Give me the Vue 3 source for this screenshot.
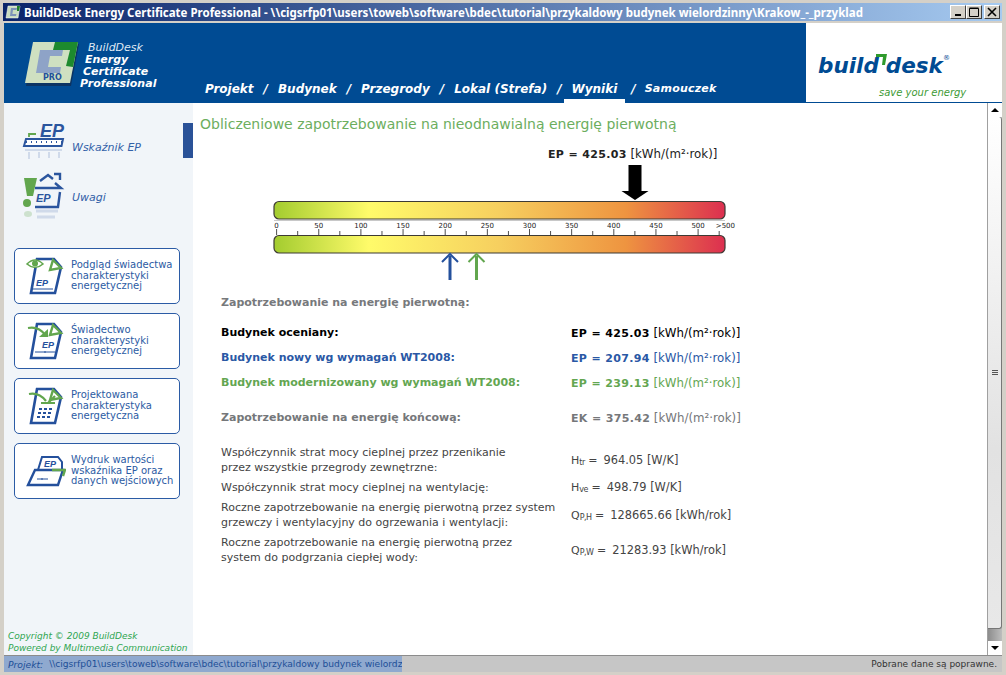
<script setup>
const navItems = [
  { label: 'Projekt' },
  { label: 'Budynek' },
  { label: 'Przegrody' },
  { label: 'Lokal (Strefa)' },
  { label: 'Wyniki', active: true },
]

const actions = [
  { icon: 'eye', lines: ['Podgląd świadectwa', 'charakterystyki', 'energetycznej'] },
  { icon: 'cert', lines: ['Świadectwo', 'charakterystyki', 'energetycznej'] },
  { icon: 'calc', lines: ['Projektowana', 'charakterystyka', 'energetyczna'] },
  { icon: 'print', lines: ['Wydruk wartości', 'wskaźnika EP oraz', 'danych wejściowych'] },
]

const ticks = Array.from({ length: 22 }, (_, i) => i * 25)
const unit = '[kWh/(m²·rok)]'

const summary = [
  { label: 'Budynek oceniany:', value: 'EP = 425.03', tone: 'black', top: 0 },
  { label: 'Budynek nowy wg wymagań WT2008:', value: 'EP = 207.94', tone: 'blue', top: 0 },
  { label: 'Budynek modernizowany wg wymagań WT2008:', value: 'EP = 239.13', tone: 'green', top: 0 },
  { label: 'Zapotrzebowanie na energię końcową:', value: 'EK = 375.42', tone: 'grey', top: 1 },
]

const details = [
  { lines: ['Współczynnik strat mocy cieplnej przez przenikanie', 'przez wszystkie przegrody zewnętrzne:'], sym: 'H', sub: 'tr', val: '964.05 [W/K]' },
  { lines: ['Współczynnik strat mocy cieplnej na wentylację:'], sym: 'H', sub: 've', val: '498.79 [W/K]' },
  { lines: ['Roczne zapotrzebowanie na energię pierwotną przez system', 'grzewczy i wentylacyjny do ogrzewania i wentylacji:'], sym: 'Q', sub: 'P,H', val: '128665.66 [kWh/rok]' },
  { lines: ['Roczne zapotrzebowanie na energię pierwotną przez', 'system do podgrzania ciepłej wody:'], sym: 'Q', sub: 'P,W', val: '21283.93 [kWh/rok]' },
]
</script>

<template>
  <div class="window">
    <div class="titlebar">
      <svg class="app-icon" width="16" height="14" viewBox="0 0 16 14">
        <path d="M3 1h12l-2 12H1z" fill="#c9dcc0" stroke="#fff" stroke-width=".5" />
        <path d="M6 3h6l-.5 2H8l-.6 4h4l-.4 2H5z" fill="#7d93b8" />
        <path d="M12 1h3l-1 5h-2z" fill="#1e7f2c" />
      </svg>
      <span class="title">BuildDesk Energy Certificate Professional - \\cigsrfp01\users\toweb\software\bdec\tutorial\przykaldowy budynek wielordzinny\Krakow_-_przyklad</span>
      <div class="controls">
        <span class="ctl"><svg width="10" height="10" viewBox="0 0 10 10"><rect x="2" y="7" width="6" height="2" fill="#000" /></svg></span>
        <span class="ctl"><svg width="10" height="10" viewBox="0 0 10 10"><path d="M.5 1.500h9v8h-9zM.5 1h9" fill="none" stroke="#000" /></svg></span>
        <span class="ctl close"><svg width="10" height="10" viewBox="0 0 10 10"><path d="M1 1l8 8M9 1l-8 8" stroke="#000" stroke-width="1.600" /></svg></span>
      </div>
    </div>

    <header class="header">
      <div class="logo">
        <svg class="logo-mark" width="56" height="46" viewBox="0 0 56 46">
          <path d="M9 3h45l-8 42H1z" fill="#10294f" opacity=".7" />
          <path d="M8 1h45l-8 41H0z" fill="#cfe0c1" />
          <path d="M30 1h23l-5 25-7-1 4-16H28z" fill="#1d8a2e" />
          <path d="M15 9h23l-1 6H25l-2 11h13l-1 6H11z" fill="#8ea3c7" />
          <text x="18" y="39" class="pro">PRO</text>
        </svg>
        <div class="logo-text">
          <span class="l1">BuildDesk</span>
          <span class="l2">Energy</span>
          <span class="l3">Certificate</span>
          <span class="l4">Professional</span>
        </div>
      </div>
      <nav class="nav">
        <template v-for="(item, i) in navItems" :key="item.label">
          <span v-if="i" class="sep">/</span>
          <span class="nav-item" :class="{ active: item.active }">{{ item.label }}</span>
        </template>
        <span class="sep last">/</span>
        <span class="nav-item small">Samouczek</span>
      </nav>
      <div class="brand">
        <div class="brand-name">
          <span>build</span>
          <svg class="tick" width="11" height="12" viewBox="0 0 11 12"><path d="M0 0h11l-2 11H6l1-8H0z" fill="#2f9a2c" /></svg>
          <span>desk</span>
          <sup>®</sup>
        </div>
        <div class="brand-tag">save your energy</div>
      </div>
    </header>

    <div class="body">
      <aside class="sidebar">
        <div class="side-links">
          <div class="side-link">
            <svg width="48" height="50" viewBox="0 0 48 50">
              <text x="18" y="16" class="ep-big">EP</text>
              <path d="M7 16v-3h7" fill="none" stroke="#62a64e" stroke-width="1.800" />
              <path d="M4 18h37l-1.500 7H2z" fill="#fff" stroke="#2b559e" stroke-width="2" />
              <path d="M4 21h36" stroke="#2b559e" stroke-dasharray="1 4" stroke-width="2" />
              <path d="M3 29h37M7 31v7M17 31v6M27 31v6M37 31v6" stroke="#2b559e" opacity=".16" stroke-width="2" />
            </svg>
            <span>Wskaźnik EP</span>
          </div>
          <div class="side-link">
            <svg width="48" height="54" viewBox="0 0 48 54">
              <path d="M2 7h13l-4 18H5z" fill="#62a64e" />
              <circle cx="5" cy="32" r="4" fill="#62a64e" />
              <path d="M18 10l8-6 5 4M32 3h6v6M13 17h26l-6-5M38 21l-2 15H13" fill="none" stroke="#2b559e" stroke-width="2.400" />
              <text x="14" y="31" class="ep-small">EP</text>
              <ellipse cx="6" cy="43" rx="4" ry="3" fill="#62a64e" opacity=".25" />
              <path d="M14 40h22M15 46h18" stroke="#2b559e" opacity=".16" stroke-width="3" />
            </svg>
            <span>Uwagi</span>
          </div>
        </div>
        <span class="marker"></span>

        <div class="actions">
          <div v-for="action in actions" :key="action.icon" class="action">
            <svg class="action-icon" width="42" height="38" viewBox="0 0 42 38">
              <template v-if="action.icon === 'print'">
                <path d="M18 5h16l4 5v8H14z" fill="none" stroke="#24509c" stroke-width="2" />
                <text x="20" y="15" class="ep-tiny">EP</text>
                <path d="M11 18h28l-5 15H4z" fill="#fff" stroke="#24509c" stroke-width="2.400" />
                <path d="M28 18h13l-2 6" fill="none" stroke="#62a64e" stroke-width="2.400" />
                <path d="M13 27h11M18 26v2" stroke="#24509c" />
              </template>
              <template v-else>
                <path d="M13 2h17l7 8-6 26H7z" fill="#fff" stroke="#24509c" stroke-width="2.600" />
                <path d="M29 3l8 8-11 2z" fill="#fff" stroke="#62a64e" stroke-width="2.400" />
                <template v-if="action.icon === 'eye'">
                  <path d="M3 7q8-8 16 0q-8 7-16 0z" fill="#fff" stroke="#62a64e" stroke-width="1.600" />
                  <circle cx="11" cy="6.500" r="3" fill="#62a64e" />
                  <text x="12" y="29" class="ep-tiny">EP</text>
                  <path d="M9 32h20" stroke="#24509c" />
                </template>
                <template v-if="action.icon === 'cert'">
                  <path d="M4 6q11-2 17 7" fill="none" stroke="#62a64e" stroke-width="2.200" />
                  <path d="M15 15h9v-8z" fill="#62a64e" />
                  <text x="18" y="26" class="ep-tiny">EP</text>
                  <path d="M11 30h20M21 29v2" stroke="#24509c" />
                </template>
                <template v-if="action.icon === 'calc'">
                  <path d="M5 7q10-2 17 7" fill="none" stroke="#62a64e" stroke-width="2.200" />
                  <path d="M17 16h14M24 16l7-7" stroke="#62a64e" stroke-width="2.200" />
                  <path d="M15 21h3v2h-3zM20 21h3v2h-3zM25 21h3v2h-3zM14 25h3v2h-3zM19 25h3v2h-3zM24 25h3v2h-3zM13 29h3v2h-3zM18 29h3v2h-3zM23 29h3v2h-3z" fill="#24509c" />
                </template>
              </template>
            </svg>
            <div class="action-text">
              <span v-for="line in action.lines" :key="line">{{ line }}</span>
            </div>
          </div>
        </div>

        <div class="copyright">
          <span>Copyright © 2009 BuildDesk</span>
          <span>Powered by Multimedia Communication</span>
        </div>
      </aside>

      <main class="main">
        <h1 class="heading">Obliczeniowe zapotrzebowanie na nieodnawialną energię pierwotną</h1>
        <div class="gauge-label"><b class="val">EP = 425.03</b> <span class="unit">{{ unit }}</span></div>
        <svg class="gauge" width="465" height="118" viewBox="0 0 465 118">
          <defs>
            <linearGradient id="scale">
              <stop offset="0" stop-color="#a3cc2f" />
              <stop offset=".21" stop-color="#fffb6a" />
              <stop offset=".5" stop-color="#f6cf5f" />
              <stop offset=".78" stop-color="#ee9440" />
              <stop offset="1" stop-color="#dc2f50" />
            </linearGradient>
          </defs>
          <path d="M355.500 0h13v26h7L362 35l-13.500-9h7z" fill="#000" />
          <rect x="1" y="36.500" width="451" height="17.500" rx="5" fill="url(#scale)" stroke="#3d3a34" stroke-width="1.200" />
          <rect x="1" y="55" width="451" height="1" fill="#c8c8c8" />
          <g v-for="t in ticks" :key="t">
            <line :x1="3.6 + t * 0.843" :x2="3.6 + t * 0.843" :y1="t % 50 === 0 ? 64 : 66" y2="70" stroke="#222" stroke-width=".8" />
            <text v-if="t % 50 === 0 && t <= 500" :x="3.6 + t * 0.843" y="63" class="tick-label" text-anchor="middle">{{ t }}</text>
          </g>
          <text x="462" y="63" class="tick-label" text-anchor="end">&gt;500</text>
          <rect x="1" y="70.500" width="451" height="17.500" rx="5" fill="url(#scale)" stroke="#3d3a34" stroke-width="1.200" />
          <path d="M177 115V91" stroke="#24509c" stroke-width="3" />
          <path d="M169 97l8-8 8 8" fill="none" stroke="#24509c" stroke-width="2" />
          <path d="M203.500 115V91" stroke="#62a64e" stroke-width="3" />
          <path d="M195.500 97l8-8 8 8" fill="none" stroke="#62a64e" stroke-width="2" />
        </svg>

        <div class="results">
          <div class="results-title">Zapotrzebowanie na energię pierwotną:</div>
          <div v-for="row in summary" :key="row.label" class="sum-row" :class="[row.tone, { spaced: row.top }]">
            <b class="col-left">{{ row.label }}</b>
            <span><b class="val">{{ row.value }}</b> <span class="unit">{{ unit }}</span></span>
          </div>
          <div class="details">
            <div v-for="row in details" :key="row.sub" class="detail-row">
              <div class="col-left detail-label">
                <span v-for="line in row.lines" :key="line">{{ line }}</span>
              </div>
              <div class="detail-val">
                <span class="sym">{{ row.sym }}<sub>{{ row.sub }}</sub> =</span>
                <span>{{ row.val }}</span>
              </div>
            </div>
          </div>
        </div>
      </main>

      <div class="scrollbar">
        <span class="sb-btn"><i class="up"></i></span>
        <div class="sb-track">
          <div class="sb-thumb"><em></em><em></em><em></em></div>
        </div>
        <span class="sb-btn"><i class="down"></i></span>
      </div>
    </div>

    <footer class="status">
      <div class="project">
        <i>Projekt:</i>
        <span>\\cigsrfp01\users\toweb\software\bdec\tutorial\przykaldowy budynek wielordz</span>
      </div>
      <div class="status-msg">Pobrane dane są poprawne.</div>
    </footer>
  </div>
</template>

<style>
html, body {
  margin: 0;
  background: #d4d0c8;
}
</style>

<style scoped>
.window {
  width: 1006px;
  height: 675px;
  box-sizing: border-box;
  padding: 3px 4px;
  background: #d4d0c8;
  display: flex;
  flex-direction: column;
  overflow: hidden;
  font-family: "DejaVu Sans", Verdana, sans-serif;
}

.titlebar {
  height: 18px;
  margin: 0 0 2px -1px;
  background: linear-gradient(90deg, #0a246a, #a6caf0);
  display: flex;
  align-items: center;
  padding-left: 2px;
  color: #fff;
  flex-shrink: 0;
}
.app-icon {
  flex-shrink: 0;
  margin-right: 3px;
}
.title {
  flex: 1;
  font-family: "Noto Sans", sans-serif;
  font-size: 11.500px;
  font-weight: bold;
  white-space: nowrap;
  overflow: hidden;
}
.controls {
  display: flex;
  margin-right: 2px;
}
.ctl {
  width: 16px;
  height: 14px;
  box-sizing: border-box;
  background: #d4d0c8;
  border: 1px solid;
  border-color: #fff #404040 #404040 #fff;
  display: flex;
  align-items: center;
  justify-content: center;
}
.ctl.close {
  margin-left: 2px;
}

.header {
  height: 80px;
  background: #004b93;
  display: flex;
  flex-shrink: 0;
}
.logo {
  width: 189px;
  flex-shrink: 0;
  display: flex;
  padding: 18px 0 0 21px;
  box-sizing: border-box;
}
.logo-mark {
  flex-shrink: 0;
}
.pro {
  font: bold 8px "DejaVu Sans", sans-serif;
  fill: #24509c;
}
.logo-text {
  display: flex;
  flex-direction: column;
  font-style: italic;
  color: #fff;
  font-size: 11px;
  line-height: 12px;
  margin-left: 1px;
  padding-top: 1px;
}
.logo-text .l1 { padding-left: 6px; font-weight: normal; color: #dfe8f3; }
.logo-text .l2 { padding-left: 3px; font-weight: bold; }
.logo-text .l3 { padding-left: 1px; font-weight: bold; }
.logo-text .l4 { font-weight: bold; margin-left: -2px; }

.nav {
  flex: 1;
  display: flex;
  align-items: flex-end;
  padding-left: 12px;
  color: #fff;
  font-style: italic;
  font-weight: bold;
  font-size: 12px;
  white-space: nowrap;
}
.nav-item {
  height: 20px;
  box-sizing: border-box;
  line-height: 13px;
}
.nav-item.active {
  border-bottom: 4px solid #fff;
  padding: 0 8px;
  margin: 0 -8px;
}
.nav-item.small {
  font-size: 11px;
  letter-spacing: .2px;
  height: 21px;
}
.sep {
  height: 20px;
  line-height: 13px;
  margin: 0 10px;
}
.sep.last {
  margin: 0 9px 0 14px;
}

.brand {
  width: 196px;
  flex-shrink: 0;
  background: #fff;
  height: 79px;
  padding: 31px 0 0 12px;
  box-sizing: border-box;
}
.brand-name {
  color: #004b93;
  font-family: "DejaVu Sans", sans-serif;
  font-style: italic;
  font-weight: bold;
  font-size: 21.500px;
  line-height: 24px;
  display: flex;
  align-items: flex-start;
}
.tick {
  margin: 0 -1px 0 -3px;
}
.brand-name sup {
  font-size: 7px;
  line-height: 8px;
  margin: 0;
  font-style: normal;
  font-weight: normal;
}
.brand-tag {
  color: #3d9a35;
  font-size: 10px;
  font-style: italic;
  margin: 9px 0 0 61px;
  white-space: nowrap;
}

.body {
  flex: 1;
  display: flex;
  min-height: 0;
}

.sidebar {
  width: 189px;
  flex-shrink: 0;
  background: #f1f5f9;
  position: relative;
  display: flex;
  flex-direction: column;
}
.side-links {
  display: flex;
  flex-direction: column;
  padding: 18px 0 0 18px;
  height: 125px;
  box-sizing: border-box;
}
.side-link {
  display: flex;
  align-items: flex-start;
  height: 50px;
  color: #3361a8;
  font-style: italic;
  font-size: 11px;
  line-height: 14px;
  gap: 2px;
}
.side-link span {
  margin-top: 20px;
}
.marker {
  position: absolute;
  right: 0;
  top: 20px;
  width: 10px;
  height: 35px;
  background: #2a5298;
}
.ep-big {
  font: italic bold 18px "Liberation Sans", sans-serif;
  fill: #2b559e;
}
.ep-small {
  font: italic bold 11px "Liberation Sans", sans-serif;
  fill: #2b559e;
}
.ep-tiny {
  font: italic bold 9px "Liberation Sans", sans-serif;
  fill: #24509c;
}

.actions {
  display: flex;
  flex-direction: column;
  gap: 9px;
  padding: 20px 13px 0 10px;
}
.action {
  height: 56px;
  box-sizing: border-box;
  background: #fff;
  border: 1px solid #2b5ba5;
  border-radius: 5px;
  display: flex;
  align-items: center;
  padding-left: 9px;
}
.action-icon {
  flex-shrink: 0;
}
.action-text {
  display: flex;
  flex-direction: column;
  font-size: 10px;
  line-height: 10.500px;
  color: #2c5ba3;
  margin-left: 5px;
  white-space: nowrap;
}

.copyright {
  margin-top: auto;
  padding: 0 0 1px 4px;
  display: flex;
  flex-direction: column;
  color: #2fa550;
  font-style: italic;
  font-size: 9px;
  line-height: 12px;
  white-space: nowrap;
}

.main {
  flex: 1;
  background: #fff;
  min-width: 0;
  padding-top: 12px;
}
.heading {
  margin: 0 0 0 7px;
  font-size: 14px;
  line-height: 18px;
  font-weight: normal;
  color: #6cae5e;
  white-space: nowrap;
}
.gauge-label {
  margin: 14px 0 0 355px;
  font-size: 11px;
  line-height: 14px;
  color: #222;
  white-space: nowrap;
}
.unit {
  font-size: 11.800px;
}
.gauge {
  display: block;
  margin: 3px 0 0 80px;
}
.tick-label {
  font: 7px "DejaVu Sans", sans-serif;
  fill: #222;
}

.results {
  padding: 13px 0 0 28px;
  font-size: 11px;
}
.results-title {
  font-weight: bold;
  color: #77797c;
  line-height: 14px;
  margin-bottom: 16px;
}
.sum-row {
  display: flex;
  height: 25px;
  line-height: 14px;
  white-space: nowrap;
}
.sum-row.spaced {
  margin-top: 10px;
}
.val {
  letter-spacing: .36px;
}
.col-left {
  width: 350px;
  flex-shrink: 0;
}
.black { color: #000; }
.blue { color: #2a58a5; }
.green { color: #63a651; }
.grey { color: #75777a; }

.details {
  padding-top: 9px;
  color: #444;
}
.detail-row {
  display: flex;
  align-items: center;
  margin-bottom: 5px;
  font-size: 11px;
  line-height: 15px;
  white-space: nowrap;
}
.detail-label {
  display: flex;
  flex-direction: column;
}
.detail-val {
  display: flex;
  gap: 6px;
  font-size: 11.400px;
}
.sym {
  font-size: 11px;
}
.sym sub {
  font-size: 8px;
  line-height: 0;
  vertical-align: -1px;
  letter-spacing: -.5px;
}

.scrollbar {
  width: 15px;
  flex-shrink: 0;
  background: #c6c6c6;
  display: flex;
  flex-direction: column;
  border-left: 1px solid #a0a0a0;
  box-sizing: border-box;
}
.sb-btn {
  height: 14px;
  flex-shrink: 0;
  background: #fff;
  display: flex;
  align-items: center;
  justify-content: center;
}
.sb-btn i {
  width: 0;
  height: 0;
  border-left: 4px solid transparent;
  border-right: 4px solid transparent;
}
.sb-btn .up {
  border-bottom: 4px solid #000;
}
.sb-btn .down {
  border-top: 4px solid #000;
}
.sb-track {
  flex: 1;
  background: linear-gradient(90deg, #8d8d8d, #bdbdbd);
  display: flex;
  align-items: flex-start;
  min-height: 0;
}
.sb-thumb {
  flex: 1;
  height: 512px;
  box-sizing: border-box;
  border-radius: 0 3px 3px 0;
  border-right: 1px solid #777;
  border-bottom: 1px solid #777;
  background: linear-gradient(180deg, #fff, #e2e2e2 65%, #e8e8e8);
  display: flex;
  flex-direction: column;
  align-items: center;
  justify-content: center;
  gap: 1px;
}
.sb-thumb em {
  width: 6px;
  height: 1px;
  background: #555;
}

.status {
  height: 16px;
  flex-shrink: 0;
  background: #c6c6c6;
  border-top: 1px solid #8c8c8c;
  display: flex;
  justify-content: space-between;
  font-size: 9px;
  line-height: 17px;
  white-space: nowrap;
}
.project {
  width: 398px;
  box-sizing: border-box;
  background: #8fa9cf;
  color: #1d4f97;
  padding-left: 4px;
  overflow: hidden;
  display: flex;
  gap: 6px;
}
.project span {
  font-size: 9.100px;
}
.project i {
  font-size: 9.200px;
}
.status-msg {
  color: #333;
  padding-right: 5px;
}
</style>
